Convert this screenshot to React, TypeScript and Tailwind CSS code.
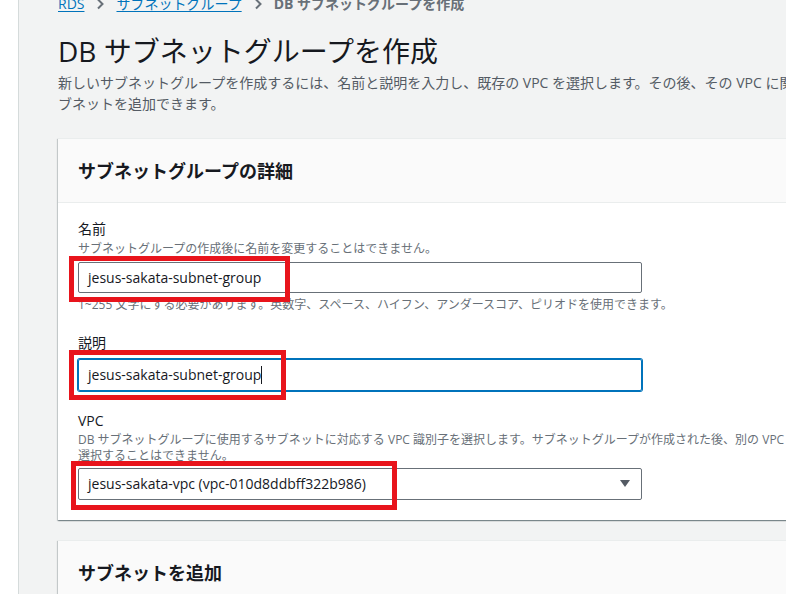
import React from "react";

const RedMark = ({ className }: { className: string }) => (
  <div className={`absolute border-[5px] border-[#e8141c] pointer-events-none ${className}`} />
);

const Chevron = () => (
  <svg width="10" height="12" viewBox="0 0 10 12" className="mx-[11px] shrink-0">
    <path d="M3 1.5 L7.5 6 L3 10.5" fill="none" stroke="#687078" strokeWidth="2" />
  </svg>
);

const App = () => {
  return (
    <div className="w-[786px] h-[594px] overflow-hidden flex bg-[#f2f3f3] text-[#16191f] font-['Open_Sans','Noto_Sans_CJK_JP',sans-serif]">
      <div className="w-[19px] shrink-0 bg-white border-r border-[#d5dbdb]" />
      <main className="w-[1000px] shrink-0 pl-[39px] -mt-[6px] flex flex-col">
        {/* breadcrumb */}
        <nav className="flex items-center h-5 text-sm leading-5">
          <a className="text-[#0073bb] underline underline-offset-2">RDS</a>
          <Chevron />
          <a className="text-[#0073bb] underline underline-offset-2">サブネットグループ</a>
          <Chevron />
          <span className="text-[#687078] font-bold">DB サブネットグループを作成</span>
        </nav>

        <h1 className="mt-[19px] text-[28px] leading-[36px] font-normal">DB サブネットグループを作成</h1>
        <p className="mt-[3px] text-sm leading-[21px] text-[#545b64] whitespace-nowrap">
          新しいサブネットグループを作成するには、名前と説明を入力し、既存の VPC を選択します。その後、その VPC に関連付けられたサ
          <br />
          ブネットを追加できます。
        </p>

        {/* details card */}
        <section className="mt-[24px] bg-white shadow-[0_1px_1px_0_rgba(0,28,36,0.3),1px_1px_1px_0_rgba(0,28,36,0.15),-1px_1px_1px_0_rgba(0,28,36,0.15)] border-t border-[#eaeded]">
          <div className="h-[64px] bg-[#fafafa] border-b border-[#eaeded] px-5 flex items-center">
            <h2 className="text-lg font-bold leading-6">サブネットグループの詳細</h2>
          </div>
          <div className="px-5 pt-[16px] pb-[20px] flex flex-col">
            {/* name */}
            <div className="flex flex-col">
              <label className="text-sm leading-5">名前</label>
              <span className="mt-[2px] text-xs leading-4 text-[#687078]">
                サブネットグループの作成後に名前を変更することはできません。
              </span>
              <div className="relative mt-[5px] w-[564px]">
                <div className="h-[31px] border border-[#687078] rounded-[2px] px-[9px] flex items-center text-sm">
                  jesus-sakata-subnet-group
                </div>
                <RedMark className="-left-[9px] -top-[6px] w-[221px] h-[46px]" />
              </div>
              <span className="mt-[4px] text-xs leading-4 text-[#687078]">
                1~255 文字にする必要があります。英数字、スペース、ハイフン、アンダースコア、ピリオドを使用できます。
              </span>
            </div>

            {/* description */}
            <div className="mt-[20px] flex flex-col">
              <label className="text-sm leading-5">説明</label>
              <div className="relative mt-[6px] w-[564px]">
                <div className="h-[32px] border border-[#0073bb] ring-1 ring-[#0073bb] rounded-[2px] px-[9px] flex items-center text-sm">
                  jesus-sakata-subnet-group
                  <span className="w-px h-[18px] bg-[#16191f]" />
                </div>
                <RedMark className="-left-[9px] -top-[9px] w-[217px] h-[50px]" />
              </div>
            </div>

            {/* vpc */}
            <div className="mt-[20px] flex flex-col">
              <label className="text-sm leading-5">VPC</label>
              <span className="mt-[1px] text-xs leading-4 text-[#687078] whitespace-nowrap">
                DB サブネットグループに使用するサブネットに対応する VPC 識別子を選択します。サブネットグループが作成された後、別の VPC を
                <br />
                選択することはできません。
              </span>
              <div className="relative mt-[4px] w-[564px]">
                <div className="h-[32px] border border-[#687078] rounded-[2px] pl-[9px] pr-[11px] flex items-center justify-between text-sm">
                  <span>jesus-sakata-vpc (vpc-010d8ddbff322b986)</span>
                  <svg width="10" height="8" viewBox="0 0 10 8">
                    <path d="M0 0 H10 L5 7 Z" fill="#545b64" />
                  </svg>
                </div>
                <RedMark className="-left-[7px] -top-[7px] w-[326px] h-[49px]" />
              </div>
            </div>
          </div>
        </section>

        {/* subnets card */}
        <section className="mt-[20px] bg-white shadow-[0_1px_1px_0_rgba(0,28,36,0.3),1px_1px_1px_0_rgba(0,28,36,0.15),-1px_1px_1px_0_rgba(0,28,36,0.15)] border-t border-[#eaeded]">
          <div className="h-[64px] bg-[#fafafa] border-b border-[#eaeded] px-5 flex items-center">
            <h2 className="text-lg font-bold leading-6">サブネットを追加</h2>
          </div>
          <div className="h-[80px]" />
        </section>
      </main>
    </div>
  );
};

export default App;
